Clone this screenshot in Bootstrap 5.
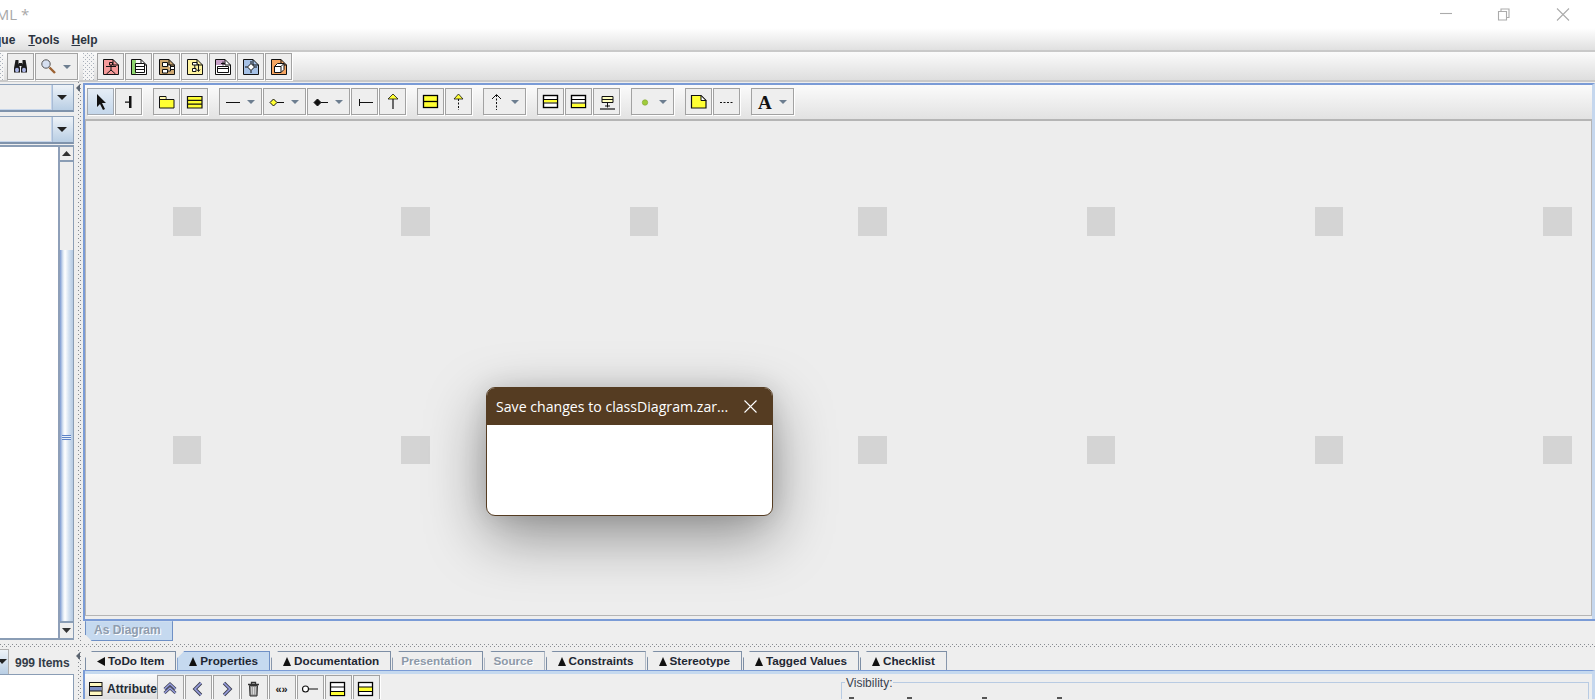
<!DOCTYPE html>
<html lang="en">
<head>
<meta charset="utf-8">
<title>ArgoUML</title>
<link href="https://cdn.jsdelivr.net/npm/bootstrap@5.3.0/dist/css/bootstrap.min.css" rel="stylesheet">
<style>
html,body{height:700px;overflow:hidden;background:#eee;}
body{font-family:"Liberation Sans",Arial,sans-serif;font-size:12px;color:#222;}
.win{width:1595px;height:700px;position:relative;overflow:hidden;}
.titlebar{height:28px;background:#fff;}
.app-title{font-family:"Open Sans",sans-serif;font-size:15px;color:#a9a9a9;margin-left:-48px;line-height:28px;white-space:nowrap;}
.wctl{margin-left:auto;margin-right:5px;}
.menubar{height:22px;background:linear-gradient(#fff,#e0e0e0);font-weight:700;color:#2c3440;line-height:24px;white-space:nowrap;}
.menu-item{margin-right:12px;}
.menu-first{margin-left:-30px;margin-right:13px;}
.mainbar{height:33px;border-top:2px solid #c9c9c9;border-bottom:2px solid #c9c9c9;background:linear-gradient(#fbfbfb,#dedede);padding-top:1px;}
.grip{background-color:#f4f4f4;background-image:conic-gradient(from 0deg at 1px 1px,transparent 75%,#a9b0bb 0),conic-gradient(from 0deg at 1px 1px,transparent 75%,#a9b0bb 0);background-size:4px 4px;background-position:0 0,2px 2px;}
.grip-a{width:4px;height:27px;margin-right:3px;}
.grip-b{width:11px;height:27px;margin:0 3px 0 4px;}
.tb{width:27px;height:27px;padding:0;border:0;border-radius:0;background:#eee;box-shadow:inset 0 0 0 1px #a2a2a2,1px 1px 0 #fff;flex:none;display:block;margin-right:1px;}
.tb.wide{width:43px;}
.tb.on{background:linear-gradient(#e6eef7,#c3d6ea);box-shadow:inset 0 0 0 1px #a2a8b0,1px 1px 0 #fff;}
.tb svg{display:block;}
.g{margin-left:10px;}
.mid{height:559px;}
.leftp{width:75px;padding-top:2px;}
.combo{height:28px;width:74px;margin-bottom:4px;display:flex;border:1px solid #8ea2bb;border-left:0;border-bottom:2px solid #7f93ac;background:#eee;}
.combo-f{flex:1;border-right:1px solid #a9bcd6;box-shadow:inset -1px -1px 0 #c5d5ea;}
.combo-b{width:20px;background:linear-gradient(#eef3f8,#b9cee4);}
.combo-b svg{display:block;}
.listp{height:495px;width:74px;margin-top:-3px;display:flex;border-top:2px solid #8a9db5;border-bottom:2px solid #8a9db5;border-right:1px solid #8a9db5;}
.listw{flex:1;background:#fff;}
.scrl{width:15px;display:flex;flex-direction:column;border-left:2px solid #8e9fb8;}
.sbtn{height:15px;background:#eee;border-bottom:2px solid #8a9db5;flex:none;}
.sbtn svg{display:block;}
.sbtn.dn{height:17px;border-top:2px solid #8a9db5;border-bottom:0;}
.strack{height:88px;background:#eee;flex:none;}
.sthumb{flex:1;background:linear-gradient(90deg,#7c9ad2 0,#dbe6f3 3px,#fff 5px,#d2e0f0 9px,#b4c9e2 100%);display:flex;align-items:center;justify-content:center;}
.lines{width:9px;height:5px;margin-top:3px;background:repeating-linear-gradient(#5d83c8 0 1px,#e8f0f8 1px 2px);}
.vsplit{width:8px;background-color:#eee;background-image:conic-gradient(from 0deg at 1px 1px,transparent 75%,#85898f 0),conic-gradient(from 0deg at 1px 1px,transparent 75%,#85898f 0);background-size:4px 4px;background-position:3px 0,5px 2px;background-repeat:repeat-y;position:relative;}
.caret-l{position:absolute;left:1px;top:2px;width:0;height:0;border:4px solid transparent;border-left-width:0;border-right:4px solid #5b6470;}
.rightp{flex:1;margin-top:1px;border-top:2px solid #7a9bd6;border-left:2px solid #7a9bd6;border-right:3px solid #c5d7ee;min-width:0;}
.intool{height:34px;background:linear-gradient(#fbfbfb,#e2e2e2);padding:3px 0 0 2px;}
.canvasx{height:497px;border:2px solid #b5b5b5;border-width:2px 1px 1px 1px;background:#ededed;display:grid;grid-template-columns:repeat(7,28.4px);column-gap:200px;row-gap:200px;grid-auto-rows:28.4px;padding:86px 0 0 87px;overflow:hidden;}
.sq{background:#d4d4d4;}
.strip{height:23px;margin-top:3px;border-top:2px solid #7a9bd6;margin-left:-2px;margin-right:-3px;background:#eee;}
.tabdown{width:88px;height:20px;margin-left:2px;background:#c5d9ef;border:1px solid #6f90c5;border-top:0;color:#8f9cae;font-weight:700;text-shadow:1px 1px 0 #fff;padding:0 0 0 8px;clip-path:polygon(0 0,100% 0,100% 100%,7px 100%,0 calc(100% - 7px));}
.hsplit{height:9px;background-image:conic-gradient(from 0deg at 1px 1px,transparent 75%,#888c92 0),conic-gradient(from 0deg at 1px 1px,transparent 75%,#888c92 0);background-size:4px 4px;background-position:0 3px,2px 5px;background-repeat:repeat-x;}
.bot{height:50px;}
.leftb{width:75px;flex:none;}
.itemsrow{height:26px;margin-top:-1px;display:flex;border-bottom:1px solid #8a9db5;width:74px;}
.ibtn{width:9px;background:linear-gradient(#eef3f8,#b9cee4);border-right:1px solid #b0b0b0;border-top:1px solid #b0b0b0;}
.ibtn svg{display:block;}
.itxt{padding:5px 0 0 6px;font-weight:700;color:#333c48;white-space:nowrap;}
.whitebox{height:30px;width:74px;background:#fff;border-right:1px solid #8a9db5;}
.rightb{flex:1;min-width:0;padding-left:2px;}
.bsplit{width:8px;flex:none;}
.tabsx{border-bottom:0;height:19px;margin-top:1px;flex-wrap:nowrap;padding:0;gap:1px;}
.tabsx .nav-link{height:19px;border:1px solid #7d8ea5;border-bottom:0;border-radius:0;padding:0 11px 0 11px;color:#1e2733;font-weight:700;font-size:11.7px;line-height:18px;background:#eee;margin:0;display:flex;align-items:center;gap:3px;white-space:nowrap;clip-path:polygon(7px 0,100% 0,100% 100%,0 100%,0 7px);}
.tabsx .nav-link.active{background:#c5d9ef;color:#1e2733;border-color:#6f90c5;}
.tabsx .nav-link.disabled{color:#8d99a8;text-shadow:1px 1px 0 #fff;padding:0 10.5px 1px 8px;border-color:#7d8ea5;}
.panelb{height:29px;border-top:1px solid #7a9bd6;border-left:2px solid #7a9bd6;margin-left:-2px;border-right:3px solid #c5d7ee;}
.panelb-in{border-top:3px solid #c5d9ef;height:28px;overflow:hidden;display:flex;}
.panelb-in .tb{margin-top:1px;}
.attr{width:72px;flex:none;height:30px;background:linear-gradient(#fbfbfb,#d9d9d9);display:flex;align-items:center;gap:4px;padding-left:4px;font-weight:700;color:#222a35;white-space:nowrap;overflow:hidden;}
.attr svg{flex:none;}
.fieldx{margin:8px 3px 0 auto;width:748px;height:30px;border:1px solid #b8cbe3;border-bottom:0;position:relative;flex:none;}
.fieldx-l{position:absolute;left:3px;top:-6px;background:#eee;padding:0 1px;line-height:13px;color:#39424e;}
.ticks{position:absolute;left:0;top:14px;width:100%;}
.tick{position:absolute;top:0;width:5px;height:2px;background:#555;}
.dlg{position:absolute;left:486px;top:387px;width:287px;height:129px;background:#fff;border:1px solid #553c22;border-radius:9px;box-shadow:0 20px 60px rgba(0,0,0,.4),0 0 24px rgba(0,0,0,.1);overflow:hidden;}
.dlg-h{height:37px;background:#553c22;color:#fff;font-family:"Open Sans",sans-serif;font-size:14.13px;padding-left:9px;line-height:37px;white-space:nowrap;}
.dlg-h svg{margin:0 15px 0 auto;flex:none;}
</style>
</head>
<body>
<svg class="d-none" xmlns="http://www.w3.org/2000/svg">
  <defs>
  <polygon id="tri" points="28,12 36,12 32,16" fill="#6d7e90"/>
  <path id="page" d="M16 6.500V12H21.500M6.500 6.500H16L21.500 12V21.500H6.500Z" fill="none" stroke="#111"/>
  <rect id="box1" x="6.500" y="7.500" width="14" height="12" fill="#fff" stroke="#000" stroke-width="1.400"/>
  </defs>
</svg>
<div class="win d-flex flex-column">
  <div class="titlebar d-flex">
    <div class="app-title">ArgoUML *</div>
    <svg class="wctl" width="155" height="28" viewBox="0 0 155 28" fill="none" stroke="#ababab" stroke-width="1.100">
      <path d="M5 13.500H17"/>
      <path d="M63.500 11.500h8v8.500h-8zM66 11V9h8v8.500h-2"/>
      <path d="M122 8.500L134 20.500M134 8.500L122 20.500"/>
    </svg>
  </div>
  <div class="menubar d-flex">
    <span class="menu-item menu-first">Critique</span>
    <span class="menu-item"><u>T</u>ools</span>
    <span class="menu-item"><u>H</u>elp</span>
  </div>
  <div class="mainbar d-flex">
    <div class="grip grip-a"></div>
    <button class="btn tb" type="button"><svg width="27" height="27" viewBox="0 0 27 27"><path d="M8.500 7h3v3l1.500 5v4.500H7V15zM15.500 7h3l1.500 8v4.500h-6V15l1.500-5z" fill="#1c1c1c"/><rect x="12" y="10" width="3" height="3" fill="#1c1c1c"/><ellipse cx="10" cy="17" rx="2" ry="2.200" fill="#aab4e4"/><ellipse cx="17" cy="17" rx="2" ry="2.200" fill="#aab4e4"/></svg></button>
    <button class="btn tb wide" type="button"><svg width="43" height="27" viewBox="0 0 43 27"><path d="M14.500 14.500L20 20" stroke="#9c6233" stroke-width="2.400"/><circle cx="11" cy="11" r="4.200" fill="#d5dff0" stroke="#555"/><use href="#tri"/></svg></button>
    <div class="grip grip-b"></div>
    <button class="btn tb" type="button"><svg width="27" height="27" viewBox="0 0 27 27"><path d="M6.500 6.500H16L21.500 12V21.500H6.500Z" fill="#f69a9a"/><use href="#page"/><path d="M12.500 9.500h3v2.500h-3zM14 12v5M9 13.500h10M14 17l-4.500 4M14 17l4.500 4" fill="none" stroke="#111"/></svg></button>
    <button class="btn tb" type="button"><svg width="27" height="27" viewBox="0 0 27 27"><path d="M6.500 6.500H16L21.500 12V21.500H6.500Z" fill="#fff"/><rect x="7" y="7" width="4" height="14" fill="#8fd66f"/><use href="#page"/><path d="M10.500 10.500h9v9h-9zM10.500 13.500h9M10.500 16.500h9" fill="#fff" stroke="#111"/></svg></button>
    <button class="btn tb" type="button"><svg width="27" height="27" viewBox="0 0 27 27"><path d="M6.500 6.500H16L21.500 12V21.500H6.500Z" fill="#cfa871"/><use href="#page"/><path d="M9.500 9.500h5v4h-5zM17.500 13.500h4v3h-4zM9.500 16.500h5v3.500h-5zM14.500 12h3v3M14.500 18h3v-2" fill="#fff" stroke="#111"/></svg></button>
    <button class="btn tb" type="button"><svg width="27" height="27" viewBox="0 0 27 27"><path d="M6.500 6.500H16L21.500 12V21.500H6.500Z" fill="#fff4a0"/><use href="#page"/><path d="M11.500 9.500h4.500v2.500h-4.500zM13.800 12v3M11.500 15.500h3.500v3h-3.500zM17.500 11v7M16 16.500l1.500 2 1.500-2" fill="#fff" stroke="#111"/></svg></button>
    <button class="btn tb" type="button"><svg width="27" height="27" viewBox="0 0 27 27"><path d="M6.500 6.500H16L21.500 12V21.500H6.500Z" fill="#fff"/><rect x="7" y="7" width="9" height="5" fill="#c7a0c7"/><use href="#page"/><path d="M8.500 13.500h11v6h-11zM12 10.500h4M14 8.500v4M8.500 15.500h11" fill="#fff" stroke="#111"/></svg></button>
    <button class="btn tb" type="button"><svg width="27" height="27" viewBox="0 0 27 27"><path d="M6.500 6.500H16L21.500 12V21.500H6.500Z" fill="#a6c1e6"/><use href="#page"/><path d="M14 10.500l3.500 3.500-3.500 3.500-3.500-3.500z" fill="#fff" stroke="#111"/><path d="M8 14h2.500M17.500 14H20M14 8v2.500M14 17.500V20" stroke="#111"/></svg></button>
    <button class="btn tb" type="button"><svg width="27" height="27" viewBox="0 0 27 27"><path d="M6.500 6.500H16L21.500 12V21.500H6.500Z" fill="#f6a560"/><use href="#page"/><path d="M9.500 13.500h6.500v6h-6.500zM9.500 13.500l3-3h6.500v6l-3 3M16 13.500l3-3" fill="#fff" stroke="#111"/></svg></button>
  </div>
  <div class="mid d-flex">
    <div class="leftp">
      <div class="combo"><div class="combo-f"></div><div class="combo-b"><svg width="19" height="26" viewBox="0 0 19 26"><polygon points="4,10 14,10 9,15" fill="#222"/></svg></div></div>
      <div class="combo"><div class="combo-f"></div><div class="combo-b"><svg width="19" height="26" viewBox="0 0 19 26"><polygon points="4,10 14,10 9,15" fill="#222"/></svg></div></div>
      <div class="listp">
        <div class="listw"></div>
        <div class="scrl">
          <div class="sbtn"><svg width="13" height="13" viewBox="0 0 13 13"><polygon points="2,9 11,9 6.500,4" fill="#333"/></svg></div>
          <div class="strack"></div>
          <div class="sthumb"><div class="lines"></div></div>
          <div class="sbtn dn"><svg width="13" height="15" viewBox="0 0 13 15"><polygon points="2,5 11,5 6.500,10" fill="#333"/></svg></div>
        </div>
      </div>
    </div>
    <div class="vsplit"><span class="caret-l"></span></div>
    <div class="rightp">
      <div class="intool d-flex">
        <button class="btn tb on" type="button"><svg width="27" height="27" viewBox="0 0 27 27"><path d="M10 6L19 15H15L18 21L16 22L13 16L10 19Z" fill="#111"/></svg></button>
        <button class="btn tb" type="button"><svg width="27" height="27" viewBox="0 0 27 27"><path d="M14 8h2.500v12H14zM10 13.500h4v1.200h-4z" fill="#111"/></svg></button>
        <button class="btn tb g" type="button"><svg width="27" height="27" viewBox="0 0 27 27"><path d="M6.500 8.500H13V11.500H21V20H6.500Z" fill="#ffff33" stroke="#111"/><path d="M7 9h5.500v2.500H7z" fill="#fff8b0"/><path d="M6.500 11.500H13" stroke="#111"/></svg></button>
        <button class="btn tb" type="button"><svg width="27" height="27" viewBox="0 0 27 27"><path d="M6.500 8.500h14.500v11.500H6.500z" fill="#ffff33" stroke="#111" stroke-width="1.200"/><path d="M6.500 12.300h14.500M6.500 16.200h14.500" stroke="#111" stroke-width="1.200"/></svg></button>
        <button class="btn tb wide g" type="button"><svg width="43" height="27" viewBox="0 0 43 27"><path d="M7 14.500H21" stroke="#111"/><use href="#tri"/></svg></button>
        <button class="btn tb wide" type="button"><svg width="43" height="27" viewBox="0 0 43 27"><path d="M14 14.500H21" stroke="#111"/><path d="M10.500 11l3.500 3.500-3.500 3.500-3.500-3.500z" fill="#ffff33" stroke="#111"/><use href="#tri"/></svg></button>
        <button class="btn tb wide" type="button"><svg width="43" height="27" viewBox="0 0 43 27"><path d="M14 14.500H21" stroke="#111"/><path d="M10.500 11l3.500 3.500-3.500 3.500-3.500-3.500z" fill="#111" stroke="#111"/><use href="#tri"/></svg></button>
        <button class="btn tb" type="button"><svg width="27" height="27" viewBox="0 0 27 27"><path d="M8.500 11v7M8.500 14.500H22" stroke="#111"/></svg></button>
        <button class="btn tb" type="button"><svg width="27" height="27" viewBox="0 0 27 27"><path d="M14 11v10" stroke="#111" stroke-width="1.200"/><path d="M14 6l5 5H9z" fill="#ffff33" stroke="#111" stroke-width=".8"/></svg></button>
        <button class="btn tb g" type="button"><svg width="27" height="27" viewBox="0 0 27 27"><rect x="6.500" y="7.500" width="14" height="12" fill="#ffff33" stroke="#000" stroke-width="1.300"/><path d="M6.500 13.500H20.500" stroke="#000" stroke-width="1.300"/></svg></button>
        <button class="btn tb" type="button"><svg width="27" height="27" viewBox="0 0 27 27"><path d="M13.500 11v11" stroke="#111" stroke-dasharray="2 1.500"/><path d="M13.500 6l4.500 5H9z" fill="#ffff33" stroke="#111" stroke-width=".8"/></svg></button>
        <button class="btn tb wide g" type="button"><svg width="43" height="27" viewBox="0 0 43 27"><path d="M13.500 7v15" stroke="#111" stroke-dasharray="2 1.500"/><path d="M9 11l4.500-4.500L18 11" fill="none" stroke="#111"/><use href="#tri"/></svg></button>
        <button class="btn tb g" type="button"><svg width="27" height="27" viewBox="0 0 27 27"><use href="#box1"/><rect x="7" y="11.500" width="13" height="3" fill="#ffff33"/><path d="M6.500 11.500h14M6.500 15h14" stroke="#000"/></svg></button>
        <button class="btn tb" type="button"><svg width="27" height="27" viewBox="0 0 27 27"><use href="#box1"/><rect x="7" y="15.500" width="13" height="3.500" fill="#ffff33"/><path d="M6.500 11.500h14M6.500 15h14" stroke="#000"/></svg></button>
        <button class="btn tb" type="button"><svg width="27" height="27" viewBox="0 0 27 27"><path d="M9 8.500h11v6H9z" fill="#ffffc0" stroke="#111"/><path d="M9 11.500h11M14.500 14.500v5" stroke="#111"/><path d="M7 21h15" stroke="#111" stroke-width="1.200"/><path d="M12 18h5" stroke="#111"/></svg></button>
        <button class="btn tb wide g" type="button"><svg width="43" height="27" viewBox="0 0 43 27"><circle cx="14" cy="14.500" r="2.700" fill="#a0cc3a" stroke="#86a838" stroke-width=".7"/><use href="#tri"/></svg></button>
        <button class="btn tb g" type="button"><svg width="27" height="27" viewBox="0 0 27 27"><path d="M6.500 7.500H16L21 12.500V20H6.500Z" fill="#ffff33" stroke="#111" stroke-width="1.200"/><path d="M16 7.500V12.500H21z" fill="#fff" stroke="#111"/></svg></button>
        <button class="btn tb" type="button"><svg width="27" height="27" viewBox="0 0 27 27"><path d="M7 14.500H21" stroke="#111" stroke-dasharray="2 1.500"/></svg></button>
        <button class="btn tb wide g" type="button"><svg width="43" height="27" viewBox="0 0 43 27"><text x="7" y="21" font-family="Liberation Serif,serif" font-weight="700" font-size="19" fill="#111">A</text><use href="#tri"/></svg></button>
      </div>
      <div class="canvasx">
        <i class="sq"></i><i class="sq"></i><i class="sq"></i><i class="sq"></i><i class="sq"></i><i class="sq"></i><i class="sq"></i>
        <i class="sq"></i><i class="sq"></i><i class="sq"></i><i class="sq"></i><i class="sq"></i><i class="sq"></i><i class="sq"></i>
      </div>
      <div class="strip"><div class="tabdown">As Diagram</div></div>
    </div>
  </div>
  <div class="hsplit"></div>
  <div class="bot d-flex">
    <div class="leftb">
      <div class="itemsrow">
        <div class="ibtn"><svg width="8" height="25" viewBox="0 0 8 25"><polygon points="-2,9 7,9 2,14" fill="#222"/></svg></div>
        <div class="itxt">999 Items</div>
      </div>
      <div class="whitebox"></div>
    </div>
    <div class="bsplit vsplit"><span class="caret-l"></span></div>
    <div class="rightb">
      <ul class="nav nav-tabs tabsx">
        <li class="nav-item"><a class="nav-link" href="#"><svg width="8" height="9" viewBox="0 0 8 9"><polygon points="0,4.500 8,0 8,9" fill="#111"/></svg>ToDo Item</a></li>
        <li class="nav-item"><a class="nav-link active" href="#"><svg width="8" height="9" viewBox="0 0 8 9"><polygon points="4,0 8,9 0,9" fill="#111"/></svg>Properties</a></li>
        <li class="nav-item"><a class="nav-link" href="#"><svg width="8" height="9" viewBox="0 0 8 9"><polygon points="4,0 8,9 0,9" fill="#111"/></svg>Documentation</a></li>
        <li class="nav-item"><a class="nav-link disabled" href="#">Presentation</a></li>
        <li class="nav-item"><a class="nav-link disabled" href="#">Source</a></li>
        <li class="nav-item"><a class="nav-link" href="#"><svg width="8" height="9" viewBox="0 0 8 9"><polygon points="4,0 8,9 0,9" fill="#111"/></svg>Constraints</a></li>
        <li class="nav-item"><a class="nav-link" href="#"><svg width="8" height="9" viewBox="0 0 8 9"><polygon points="4,0 8,9 0,9" fill="#111"/></svg>Stereotype</a></li>
        <li class="nav-item"><a class="nav-link" href="#"><svg width="8" height="9" viewBox="0 0 8 9"><polygon points="4,0 8,9 0,9" fill="#111"/></svg>Tagged Values</a></li>
        <li class="nav-item"><a class="nav-link" href="#"><svg width="8" height="9" viewBox="0 0 8 9"><polygon points="4,0 8,9 0,9" fill="#111"/></svg>Checklist</a></li>
      </ul>
      <div class="panelb">
        <div class="panelb-in">
          <div class="attr"><svg width="14" height="15" viewBox="0 0 14 15"><rect x=".5" y=".5" width="12.500" height="13" fill="#fff8c0" stroke="#111"/><rect x="1" y="4.500" width="11.500" height="4.500" fill="#7c8ec4"/><path d="M.5 4.500h12.500M.5 9h12.500" stroke="#111"/></svg><span>Attribute</span></div>
          <button class="btn tb" type="button"><svg width="27" height="27" viewBox="0 0 27 27"><path d="M7.500 18l5.500-5 5.500 5M7.500 14l5.500-5 5.500 5" fill="none" stroke="#3d4050" stroke-width="3"/><path d="M7.500 18l5.500-5 5.500 5M7.500 14l5.500-5 5.500 5" fill="none" stroke="#989ee0" stroke-width="1.400"/></svg></button>
          <button class="btn tb" type="button"><svg width="27" height="27" viewBox="0 0 27 27"><path d="M16 8l-6 6 6 6" fill="none" stroke="#3d4050" stroke-width="3.400"/><path d="M16 8l-6 6 6 6" fill="none" stroke="#989ee0" stroke-width="1.600"/></svg></button>
          <button class="btn tb" type="button"><svg width="27" height="27" viewBox="0 0 27 27"><path d="M11 8l6 6-6 6" fill="none" stroke="#3d4050" stroke-width="3.400"/><path d="M11 8l6 6-6 6" fill="none" stroke="#989ee0" stroke-width="1.600"/></svg></button>
          <button class="btn tb" type="button"><svg width="27" height="27" viewBox="0 0 27 27"><path d="M7 9.500h11M10.500 9V7.500h4V9" fill="none" stroke="#333" stroke-width="1.300"/><path d="M8.500 10.500h8l-.5 10.500h-7z" fill="#8c8c8c" stroke="#333"/><path d="M10.800 12v7.500M12.500 12v7.500M14.200 12v7.500" stroke="#ddd"/></svg></button>
          <button class="btn tb" type="button"><svg width="27" height="27" viewBox="0 0 27 27"><text x="6.500" y="17.500" font-family="Liberation Sans,sans-serif" font-size="11" font-weight="700" fill="#222">«»</text></svg></button>
          <button class="btn tb" type="button"><svg width="27" height="27" viewBox="0 0 27 27"><circle cx="8.500" cy="14" r="3" fill="#fff" stroke="#111" stroke-width="1.100"/><path d="M11.500 14H21" stroke="#111"/></svg></button>
          <button class="btn tb" type="button"><svg width="27" height="27" viewBox="0 0 27 27"><rect x="5.500" y="7.500" width="14" height="13" fill="#fff" stroke="#000" stroke-width="1.300"/><rect x="6" y="16.500" width="13" height="3.500" fill="#ffff33"/><path d="M5.500 12h14M5.500 16.500h14" stroke="#000" stroke-width="1.100"/></svg></button>
          <button class="btn tb" type="button"><svg width="27" height="27" viewBox="0 0 27 27"><rect x="5.500" y="7.500" width="14" height="13" fill="#fff" stroke="#000" stroke-width="1.300"/><rect x="6" y="12" width="13" height="4" fill="#ffff33"/><path d="M5.500 12h14M5.500 16.500h14" stroke="#000" stroke-width="1.100"/></svg></button>
          <div class="fieldx"><span class="fieldx-l">Visibility:</span><div class="ticks"><i class="tick" style="left:7px"></i><i class="tick" style="left:65px"></i><i class="tick" style="left:140px"></i><i class="tick" style="left:215px"></i></div></div>
        </div>
      </div>
    </div>
  </div>
  <div class="dlg">
    <div class="dlg-h d-flex align-items-center"><span>Save changes to classDiagram.zar...</span><svg width="13" height="13" viewBox="0 0 13 13" fill="none" stroke="#fff" stroke-width="1.100"><path d="M.5.500L12.500 12.500M12.500.500L.5 12.500"/></svg></div>
  </div>
</div>
<script src="https://cdn.jsdelivr.net/npm/bootstrap@5.3.0/dist/js/bootstrap.bundle.min.js"></script>
</body>
</html>
